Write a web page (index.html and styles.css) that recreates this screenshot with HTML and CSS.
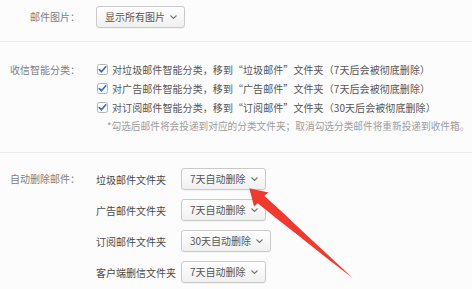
FILE: index.html
```html
<!DOCTYPE html>
<html lang="zh-CN">
<head>
<meta charset="utf-8">
<title>邮件设置</title>
<link rel="stylesheet" href="styles.css">
</head>
<body>
<div class="page">
  <section class="sec sec-img">
    <div class="label label-tall">邮件图片：</div>
    <div class="content">
      <button class="sel">显示所有图片<svg class="chev" width="7" height="4" viewBox="0 0 7 4"><polyline points="0.5,0.5 3.5,3.5 6.5,0.5"/></svg></button>
    </div>
  </section>
  <hr class="divider">
  <section class="sec sec-filter">
    <div class="label">收信智能分类：</div>
    <div class="content">
      <label class="chk-row"><svg class="chk" width="11" height="11" viewBox="0 0 11 11"><rect x="0.5" y="0.5" width="10" height="10" rx="2"/><polyline points="2.3,5.6 4.5,7.8 8.8,2.8"/></svg>对垃圾邮件智能分类，移到“垃圾邮件”文件夹（7天后会被彻底删除）</label>
      <label class="chk-row"><svg class="chk" width="11" height="11" viewBox="0 0 11 11"><rect x="0.5" y="0.5" width="10" height="10" rx="2"/><polyline points="2.3,5.6 4.5,7.8 8.8,2.8"/></svg>对广告邮件智能分类，移到“广告邮件”文件夹（7天后会被彻底删除）</label>
      <label class="chk-row"><svg class="chk" width="11" height="11" viewBox="0 0 11 11"><rect x="0.5" y="0.5" width="10" height="10" rx="2"/><polyline points="2.3,5.6 4.5,7.8 8.8,2.8"/></svg>对订阅邮件智能分类，移到“订阅邮件”文件夹（30天后会被彻底删除）</label>
      <p class="note">*勾选后邮件将会投递到对应的分类文件夹；取消勾选分类邮件将重新投递到收件箱。</p>
    </div>
  </section>
  <hr class="divider divider-2">
  <section class="sec sec-del">
    <div class="label label-tall">自动删除邮件：</div>
    <div class="rows">
      <div class="del-row"><span class="sub">垃圾邮件文件夹</span><button class="sel">7天自动删除<svg class="chev" width="7" height="4" viewBox="0 0 7 4"><polyline points="0.5,0.5 3.5,3.5 6.5,0.5"/></svg></button></div>
      <div class="del-row"><span class="sub">广告邮件文件夹</span><button class="sel">7天自动删除<svg class="chev" width="7" height="4" viewBox="0 0 7 4"><polyline points="0.5,0.5 3.5,3.5 6.5,0.5"/></svg></button></div>
      <div class="del-row"><span class="sub">订阅邮件文件夹</span><button class="sel">30天自动删除<svg class="chev" width="7" height="4" viewBox="0 0 7 4"><polyline points="0.5,0.5 3.5,3.5 6.5,0.5"/></svg></button></div>
      <div class="del-row"><span class="sub">客户端删信文件夹</span><button class="sel">7天自动删除<svg class="chev" width="7" height="4" viewBox="0 0 7 4"><polyline points="0.5,0.5 3.5,3.5 6.5,0.5"/></svg></button></div>
    </div>
  </section>
  <svg class="arrow" width="472" height="289" viewBox="0 0 472 289">
    <polygon points="249.3,188.3 268.5,192.5 264.3,195.7 282.7,212.6 301.7,230.4 330.2,257.0 353,278.3 328.2,259.2 297.7,235.0 277.2,219.0 257.7,203.3 254,206.5"/>
  </svg>
</div>
</body>
</html>
```
FILE: styles.css
```css
html, body {
  margin: 0;
  padding: 0;
  background: #fdfcfd;
}
.page {
  position: relative;
  width: 472px;
  height: 289px;
  overflow: hidden;
  font-family: "Noto Sans CJK SC", "Microsoft YaHei", sans-serif;
  font-size: 10px;
  color: #555;
}
.sec {
  display: flex;
  align-items: flex-start;
}
.sec-img {
  padding-top: 6px;
}
.sec-filter {
  padding-top: 18px;
}
.sec-del {
  padding-top: 15px;
}
.label {
  width: 80px;
  flex: none;
  text-align: right;
  color: #808080;
  line-height: 19px;
  margin-right: 16px;
  white-space: nowrap;
}
.label-tall {
  line-height: 22px;
}
.content {
  display: flex;
  flex-direction: column;
}
.divider {
  border: 0;
  border-top: 1px solid #ececec;
  margin: 13px 0 0;
  height: 0;
}
.divider-2 {
  margin-top: 16px;
}
.sel {
  display: inline-flex;
  align-items: center;
  gap: 5px;
  height: 22px;
  box-sizing: border-box;
  padding: 0 7px 0 8px;
  border: 1px solid #c9c9c9;
  border-radius: 3px;
  background: linear-gradient(#ffffff, #f0f0f0);
  box-shadow: 0 1px 1px rgba(0, 0, 0, 0.04);
  font-family: inherit;
  font-size: 10px;
  color: #555;
  line-height: 1;
  white-space: nowrap;
}
.chev {
  flex: none;
  fill: none;
  stroke: #777;
  stroke-width: 1.1;
}
.chk-row {
  display: flex;
  align-items: center;
  height: 19px;
  white-space: nowrap;
  color: #555;
  letter-spacing: 0.08px;
}
.chk {
  flex: none;
  margin: 0 4px 0 1px;
}
.chk rect {
  fill: #fff;
  stroke: #b3b3b3;
}
.chk polyline {
  fill: none;
  stroke: #2f6fc6;
  stroke-width: 1.7;
  stroke-linecap: round;
  stroke-linejoin: round;
}
.note {
  margin: 0;
  padding-left: 11px;
  height: 19px;
  line-height: 19px;
  font-size: 9.68px;
  color: #9c9c9c;
  white-space: nowrap;
}
.rows {
  display: flex;
  flex-direction: column;
  gap: 9px;
}
.del-row {
  display: flex;
  align-items: center;
  height: 22px;
}
.sub {
  width: 85px;
  flex: none;
  color: #4a4a4a;
  white-space: nowrap;
}
.arrow {
  position: absolute;
  left: 0;
  top: 0;
  pointer-events: none;
}
.arrow polygon {
  fill: #ee3a2f;
}
```
